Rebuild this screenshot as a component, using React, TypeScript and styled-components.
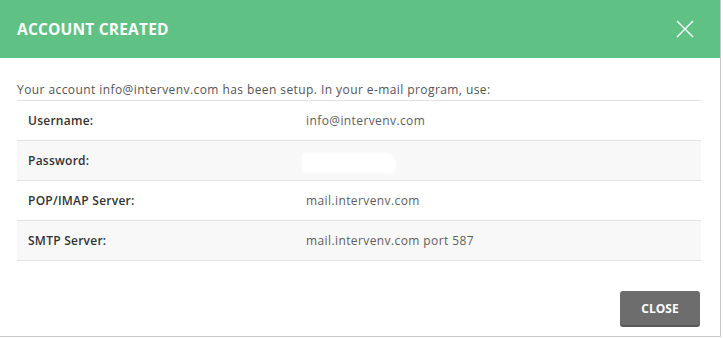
import styled, { createGlobalStyle } from "styled-components";

const GlobalStyle = createGlobalStyle`
  html, body {
    margin: 0;
    padding: 0;
    background: #ffffff;
  }
  * {
    box-sizing: border-box;
  }
`;

const Modal = styled.div`
  width: 721px;
  height: 337px;
  display: flex;
  flex-direction: column;
  background: #ffffff;
  border-right: 1px solid #c9c9c9;
  border-bottom: 1px solid #c9c9c9;
  font-family: "Open Sans", "Liberation Sans", sans-serif;
`;

const Header = styled.div`
  height: 58px;
  background: #60c184;
  display: flex;
  align-items: center;
  justify-content: space-between;
  padding: 0 26px 0 17px;
`;

const Title = styled.h1`
  margin: 0;
  color: #ffffff;
  font-size: 15.5px;
  font-weight: 700;
  letter-spacing: 0.2px;
`;

const CloseIcon = styled.button`
  border: 0;
  background: transparent;
  padding: 0;
  width: 18px;
  height: 18px;
  display: flex;
  cursor: pointer;
`;

const Body = styled.div`
  flex: 1;
  padding: 22px 19px 0 17px;
`;

const Intro = styled.p`
  margin: 0;
  height: 21px;
  line-height: 20px;
  font-size: 12px;
  letter-spacing: 0.42px;
  color: #555555;
  border-bottom: 1px solid #e3e3e3;
`;

const Table = styled.div`
  display: flex;
  flex-direction: column;
`;

const Row = styled.div<{ $striped?: boolean }>`
  height: 40px;
  display: grid;
  grid-template-columns: 278px 1fr;
  align-items: center;
  padding-left: 11px;
  background: ${(p) => (p.$striped ? "#f8f8f8" : "#ffffff")};
  border-bottom: 1px solid #e3e3e3;
  font-size: 12px;
`;

const Label = styled.span`
  color: #333333;
  font-weight: 600;
  letter-spacing: 0.25px;
`;

const Value = styled.span`
  color: #5e5e5e;
  font-weight: 400;
  letter-spacing: 0.4px;
  position: relative;
`;

const Redacted = styled.span`
  position: absolute;
  left: -4px;
  top: -8px;
  width: 94px;
  height: 20px;
  background: #ffffff;
  border-radius: 2px 10px 6px 2px;
  filter: blur(1px);
`;

const Footer = styled.div`
  display: flex;
  justify-content: flex-end;
  padding: 0 20px 11px 0;
`;

const CloseButton = styled.button`
  width: 80px;
  height: 34px;
  border: 0;
  border-radius: 3px;
  background: #6c6d6c;
  box-shadow: 0 2px 0 #575857;
  color: #ffffff;
  font-family: "Open Sans", "Liberation Sans", sans-serif;
  font-size: 12px;
  font-weight: 700;
  cursor: pointer;
`;

const rows = [
  { label: "Username:", value: "info@intervenv.com" },
  { label: "Password:", value: "", hidden: true },
  { label: "POP/IMAP Server:", value: "mail.intervenv.com" },
  { label: "SMTP Server:", value: "mail.intervenv.com port 587" },
];

export default function App() {
  return (
    <>
      <GlobalStyle />
      <Modal>
        <Header>
          <Title>ACCOUNT CREATED</Title>
          <CloseIcon aria-label="Close">
            <svg width="18" height="18" viewBox="0 0 18 18">
              <path d="M1 1L17 17M17 1L1 17" stroke="#ffffff" strokeWidth="1.4" fill="none" />
            </svg>
          </CloseIcon>
        </Header>
        <Body>
          <Intro>Your account info@intervenv.com has been setup. In your e-mail program, use:</Intro>
          <Table>
            {rows.map((r, i) => (
              <Row key={r.label} $striped={i % 2 === 1}>
                <Label>{r.label}</Label>
                <Value>{r.hidden ? <Redacted /> : r.value}</Value>
              </Row>
            ))}
          </Table>
        </Body>
        <Footer>
          <CloseButton>CLOSE</CloseButton>
        </Footer>
      </Modal>
    </>
  );
}
